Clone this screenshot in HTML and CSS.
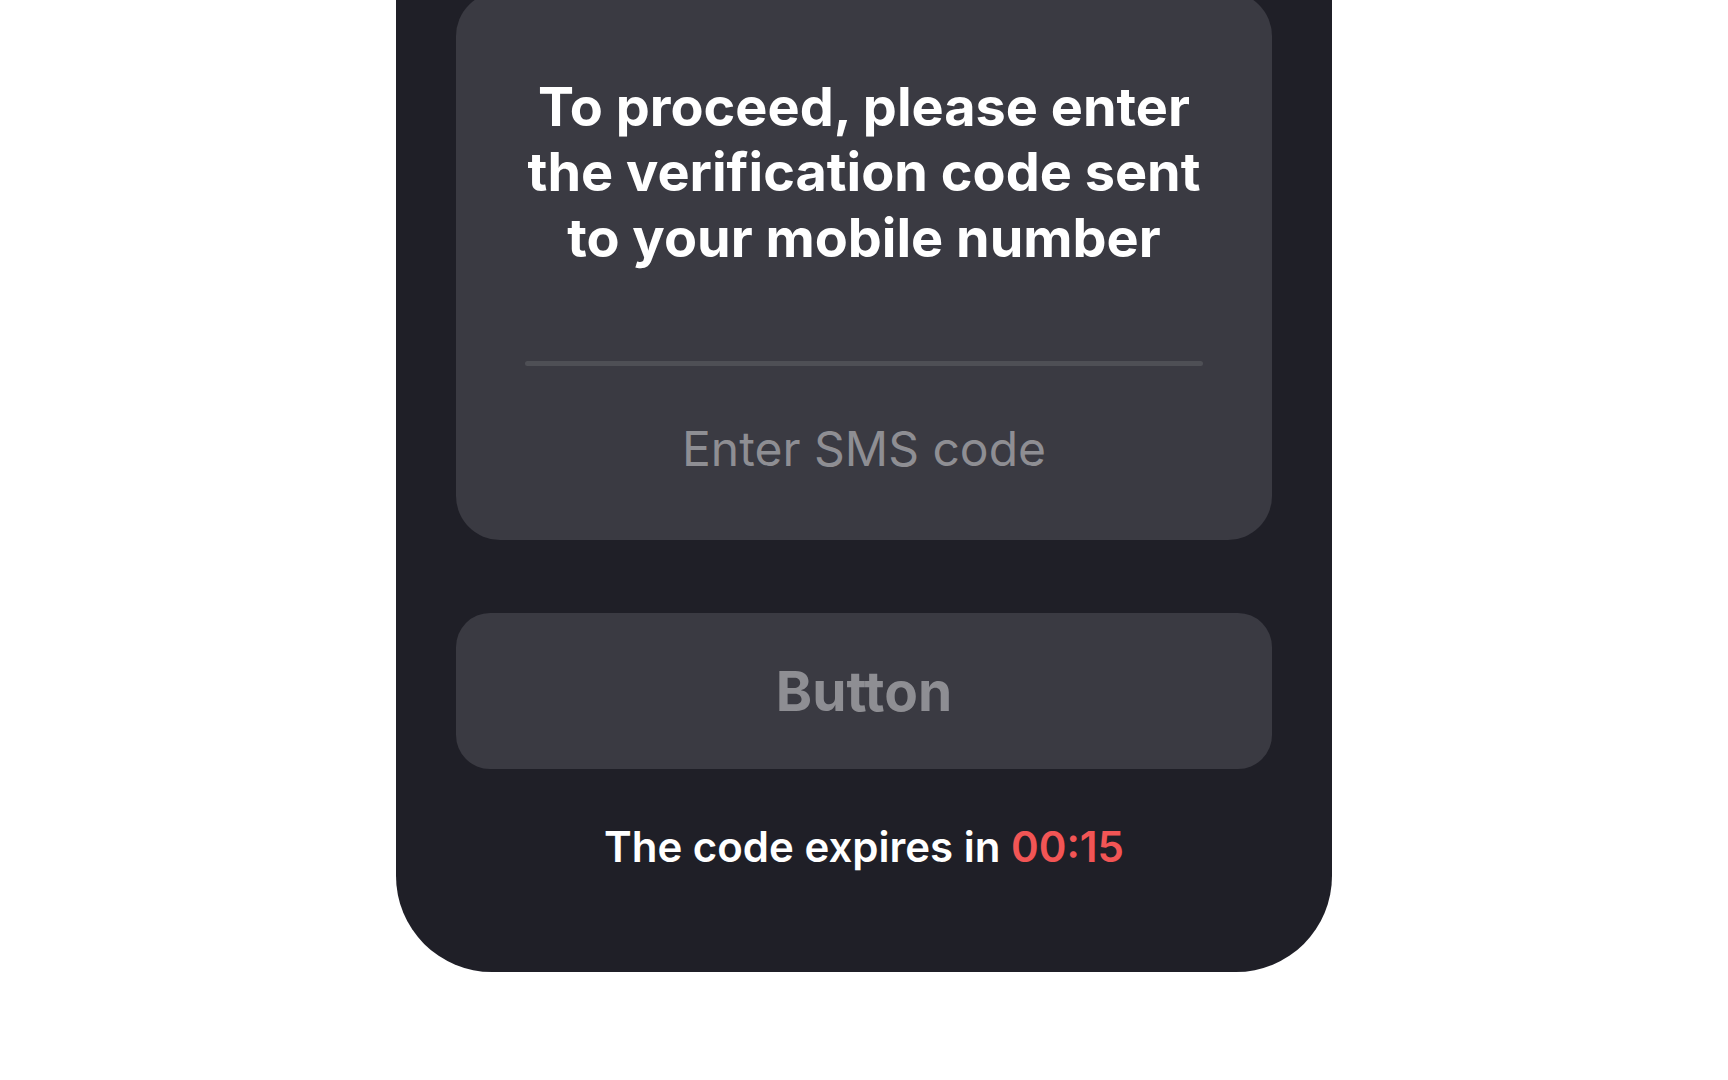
FILE: index.html
```html
<!DOCTYPE html>
<html lang="en">
<head>
    <meta charset="UTF-8">
    <meta name="viewport" content="width=device-width, initial-scale=1.0">
    <title>Verification</title>
    <link rel="stylesheet" href="styles.css">
</head>
<body>
    <div class="screen">
        <div class="panel">
            <div class="card">
                <h1 class="title">To proceed, please enter the verification code sent to your mobile number</h1>
                <div class="divider"></div>
                <div class="code-input">Enter SMS code</div>
            </div>
            <button class="btn">Button</button>
            <p class="timer">The code expires in <span class="time">00:15</span></p>
        </div>
    </div>
</body>
</html>
```

FILE: styles.css
```css
body,
h1,
p{
    margin: 0;
    padding: 0;
}
body{
    background-color: #fff;
    font-family: Inter, "Noto Sans", sans-serif;
}
.screen{
    height: 1080px;
    overflow: hidden;
    display: flex;
    flex-direction: column;
    justify-content: flex-end;
    align-items: center;
    padding-bottom: 108px;
    box-sizing: border-box;
}
.panel{
    flex-shrink: 0;
    width: 936px;
    box-sizing: border-box;
    padding: 0 60px 99px;
    background-color: #1f1f27;
    border-radius: 0 0 96px 96px;
    display: flex;
    flex-direction: column;
}
.card{
    background-color: #3a3a42;
    border-radius: 44px;
    padding: 82px 60px 62px;
    display: flex;
    flex-direction: column;
    align-items: center;
}
.title{
    color: #fff;
    font-size: 54px;
    font-weight: 700;
    line-height: 65.5px;
    text-align: center;
}
.divider{
    width: 678px;
    height: 5px;
    border-radius: 3px;
    background-color: #4e4f55;
    margin-top: 91px;
    margin-bottom: 54px;
}
.code-input{
    color: #8e8e93;
    font-size: 48px;
    line-height: 58px;
}
.btn{
    margin-top: 73px;
    height: 156px;
    border: none;
    outline: none;
    border-radius: 34px;
    background-color: #3a3a42;
    color: #8e8e93;
    font-family: Inter, "Noto Sans", sans-serif;
    font-size: 55px;
    font-weight: 700;
}
.timer{
    margin-top: 51px;
    color: #fff;
    font-size: 42px;
    font-weight: 600;
    line-height: 53px;
    text-align: center;
}
.time{
    color: #f25555;
}
```
